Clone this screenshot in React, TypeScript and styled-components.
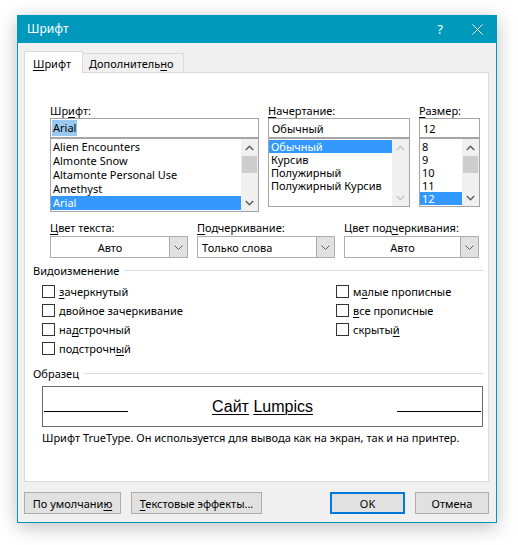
import React from "react";
import styled, { createGlobalStyle } from "styled-components";

const UI_FONT = `"Segoe UI", "Noto Sans", "DejaVu Sans", sans-serif`;

const GlobalStyle = createGlobalStyle`
  html, body { margin: 0; padding: 0; background: #ffffff; }
  body {
    font-family: ${UI_FONT};
    font-size: 11px;
    color: #000;
  }
  * { box-sizing: border-box; }
`;

const Page = styled.div`
  width: 518px;
  height: 545px;
  padding: 15px 0 0 17px;
  overflow: hidden;
`;

const Dialog = styled.div`
  width: 480px;
  border: 1px solid #0099bc;
  border-top: none;
  background: #f0f0f0;
  box-shadow: 0 4px 18px rgba(0, 0, 0, 0.26);
  display: flex;
  flex-direction: column;
`;

const TitleBar = styled.div`
  height: 28px;
  background: #0099bc;
  color: #fff;
  display: flex;
  align-items: center;
  padding: 0 13px 0 9px;
`;

const TitleText = styled.div`
  flex: 1;
  font-size: 12px;
  line-height: 16px;
`;

const TitleButtons = styled.div`
  display: flex;
  align-items: center;
  gap: 29px;
`;

const HelpGlyph = styled.span`
  font-size: 13px;
  line-height: 16px;
  color: #fff;
`;

const Body = styled.div`
  padding: 8px 7px 8px 6px;
  display: flex;
  flex-direction: column;
`;

const TabStrip = styled.div`
  display: flex;
  align-items: flex-end;
  height: 21px;
  position: relative;
  z-index: 1;
`;

const Tab = styled.div<{ $active?: boolean; $w: number }>`
  width: ${(p) => p.$w}px;
  height: ${(p) => (p.$active ? 22 : 19)}px;
  margin-bottom: ${(p) => (p.$active ? -1 : 0)}px;
  margin-left: ${(p) => (p.$active ? 0 : -1)}px;
  padding-left: ${(p) => (p.$active ? 8 : 6)}px;
  padding-top: 1px;
  background: ${(p) => (p.$active ? "#ffffff" : "#f0f0f0")};
  border: 1px solid #d9d9d9;
  border-bottom: none;
  display: flex;
  align-items: center;
  white-space: nowrap;
  position: relative;
  z-index: ${(p) => (p.$active ? 2 : 1)};
`;

const Panel = styled.div`
  background: #fff;
  border: 1px solid #d9d9d9;
  padding: 30px 5px 36px 8px;
  display: flex;
  flex-direction: column;
`;

const FontGrid = styled.div`
  margin-left: 17px;
  display: grid;
  grid-template-columns: 209px 142px 61px;
  column-gap: 9px;
  align-items: start;
`;

const Field = styled.div`
  display: flex;
  flex-direction: column;
`;

const FieldLabel = styled.div`
  height: 15px;
  line-height: 15px;
  white-space: nowrap;
`;

const TextInput = styled.div<{ $pad: number }>`
  height: 20px;
  border: 1px solid #a5a5a5;
  background: #fff;
  padding-left: ${(p) => p.$pad}px;
  display: flex;
  align-items: center;
  white-space: nowrap;
`;

const Highlight = styled.span`
  background: #99c9ef;
  padding: 0 1px;
  line-height: 16px;
`;

const ListBox = styled.div`
  border: 1px solid #a5a5a5;
  background: #fff;
  display: flex;
`;

const ListItems = styled.div`
  flex: 1;
  min-width: 0;
  padding: 1px 0;
`;

const ListItem = styled.div<{ $selected?: boolean; $h: number }>`
  height: ${(p) => p.$h}px;
  line-height: ${(p) => p.$h}px;
  padding-left: 2px;
  background: ${(p) => (p.$selected ? "#3399ff" : "transparent")};
  color: ${(p) => (p.$selected ? "#ffffff" : "#000000")};
  white-space: nowrap;
`;

const ScrollBar = styled.div`
  width: 17px;
  background: #f0f0f0;
  display: flex;
  flex-direction: column;
  align-items: center;
`;

const ScrollArrow = styled.div`
  width: 17px;
  height: 17px;
  display: flex;
  align-items: center;
  justify-content: center;
`;

const ScrollThumb = styled.div`
  width: 15px;
  height: 17px;
  background: #cdcdcd;
`;

const ScrollSpacer = styled.div`
  flex: 1;
`;

const ComboGrid = styled.div`
  margin: 8px 0 0 17px;
  display: grid;
  grid-template-columns: 138px 138px 135px;
  column-gap: 9px;
`;

const Combo = styled.div`
  margin-top: 1px;
  height: 22px;
  border: 1px solid #adadad;
  background: #fff;
  display: flex;
`;

const ComboText = styled.div<{ $center?: boolean }>`
  flex: 1;
  display: flex;
  align-items: center;
  justify-content: ${(p) => (p.$center ? "center" : "flex-start")};
  padding-left: ${(p) => (p.$center ? 0 : 4)}px;
  white-space: nowrap;
`;

const ComboButton = styled.div`
  width: 18px;
  background: #e1e1e1;
  border-left: 1px solid #adadad;
  display: flex;
  align-items: center;
  justify-content: center;
`;

const GroupHeader = styled.div<{ $top: number }>`
  margin-top: ${(p) => p.$top}px;
  height: 15px;
  line-height: 15px;
  display: flex;
  align-items: center;
  gap: 5px;
  white-space: nowrap;
  &::after {
    content: "";
    flex: 1;
    height: 1px;
    background: #dcdcdc;
  }
`;

const CheckColumns = styled.div`
  margin: 4px 0 0 9px;
  display: grid;
  grid-template-columns: 294px 1fr;
`;

const CheckColumn = styled.div`
  display: flex;
  flex-direction: column;
`;

const CheckRow = styled.div`
  height: 19px;
  display: flex;
  align-items: center;
  gap: 4px;
  white-space: nowrap;
`;

const CheckBox = styled.span`
  width: 13px;
  height: 13px;
  border: 1px solid #333333;
  background: #fff;
  flex: none;
`;

const PreviewBox = styled.div`
  margin: 5px 0 0 9px;
  height: 41px;
  border: 1px solid #696969;
  background: #fff;
  display: flex;
  align-items: center;
  justify-content: space-between;
  padding: 0 1px;
`;

const PreviewRule = styled.div`
  width: 84px;
  height: 1px;
  background: #000;
  margin-top: 10px;
`;

const PreviewText = styled.span`
  font-family: "Liberation Sans", Arial, sans-serif;
  font-size: 16px;
  line-height: 18px;
  white-space: pre;
  color: #000;
`;

const PreviewWord = styled.span`
  text-decoration: underline;
  text-decoration-thickness: 1px;
  text-underline-offset: 2px;
`;

const Description = styled.div`
  margin: 3px 0 0 9px;
  height: 15px;
  line-height: 15px;
  white-space: nowrap;
`;

const ButtonRow = styled.div`
  margin-top: 10px;
  display: flex;
  gap: 10px;
`;

const Button = styled.div<{ $w: number; $default?: boolean; $push?: boolean }>`
  width: ${(p) => p.$w}px;
  height: 22px;
  margin-left: ${(p) => (p.$push ? "auto" : "0")};
  background: #e1e1e1;
  border: ${(p) => (p.$default ? "2px solid #0078d7" : "1px solid #adadad")};
  display: flex;
  align-items: center;
  justify-content: center;
  white-space: nowrap;
`;

const Mn = styled.span`
  text-decoration: underline;
  text-decoration-thickness: 1px;
  text-underline-offset: 2px;
`;

const Chevron = ({ up, color }: { up?: boolean; color: string }) => (
  <svg width="9" height="6" viewBox="0 0 9 6">
    <polyline
      points={up ? "0.8,5 4.5,1.3 8.2,5" : "0.8,1 4.5,4.7 8.2,1"}
      fill="none"
      stroke={color}
      strokeWidth="1.5"
    />
  </svg>
);

const ComboChevron = () => (
  <svg width="9" height="5" viewBox="0 0 9 5">
    <polyline points="0.5,0.5 4.5,4.5 8.5,0.5" fill="none" stroke="#606060" strokeWidth="1" />
  </svg>
);

const CloseIcon = () => (
  <svg width="11" height="11" viewBox="0 0 11 11">
    <path d="M0.5 0.5 L10.5 10.5 M10.5 0.5 L0.5 10.5" stroke="#ffffff" strokeWidth="1" />
  </svg>
);

type ListProps = {
  items: string[];
  selected: number;
  h: number;
  disabled?: boolean;
};

const List = ({ items, selected, h, disabled }: ListProps) => {
  const arrowColor = disabled ? "#c6c6c6" : "#606060";
  return (
    <ListBox>
      <ListItems>
        {items.map((it, i) => (
          <ListItem key={i} $h={h} $selected={i === selected}>
            {it}
          </ListItem>
        ))}
      </ListItems>
      <ScrollBar>
        <ScrollArrow>
          <Chevron up color={arrowColor} />
        </ScrollArrow>
        {!disabled && <ScrollThumb />}
        <ScrollSpacer />
        <ScrollArrow>
          <Chevron color={arrowColor} />
        </ScrollArrow>
      </ScrollBar>
    </ListBox>
  );
};

export default function App() {
  return (
    <>
      <GlobalStyle />
      <Page>
        <Dialog>
          <TitleBar>
            <TitleText>Шрифт</TitleText>
            <TitleButtons>
              <HelpGlyph>?</HelpGlyph>
              <CloseIcon />
            </TitleButtons>
          </TitleBar>
          <Body>
            <TabStrip>
              <Tab $active $w={59}>
                <span>
                  <Mn>Ш</Mn>рифт
                </span>
              </Tab>
              <Tab $w={102}>
                <span>
                  Дополнитель<Mn>н</Mn>о
                </span>
              </Tab>
            </TabStrip>
            <Panel>
              <FontGrid>
                <Field>
                  <FieldLabel>
                    Шр<Mn>и</Mn>фт:
                  </FieldLabel>
                  <TextInput $pad={1}>
                    <Highlight>Arial</Highlight>
                  </TextInput>
                  <List
                    h={14}
                    selected={4}
                    items={["Alien Encounters", "Almonte Snow", "Altamonte Personal Use", "Amethyst", "Arial"]}
                  />
                </Field>
                <Field>
                  <FieldLabel>
                    <Mn>Н</Mn>ачертание:
                  </FieldLabel>
                  <TextInput $pad={3}>Обычный</TextInput>
                  <List
                    h={13}
                    selected={0}
                    disabled
                    items={["Обычный", "Курсив", "Полужирный", "Полужирный Курсив", ""]}
                  />
                </Field>
                <Field>
                  <FieldLabel>
                    <Mn>Р</Mn>азмер:
                  </FieldLabel>
                  <TextInput $pad={3}>12</TextInput>
                  <List h={13} selected={4} items={["8", "9", "10", "11", "12"]} />
                </Field>
              </FontGrid>

              <ComboGrid>
                <Field>
                  <FieldLabel>
                    <Mn>Ц</Mn>вет текста:
                  </FieldLabel>
                  <Combo>
                    <ComboText $center>Авто</ComboText>
                    <ComboButton>
                      <ComboChevron />
                    </ComboButton>
                  </Combo>
                </Field>
                <Field>
                  <FieldLabel>
                    <Mn>П</Mn>одчеркивание:
                  </FieldLabel>
                  <Combo>
                    <ComboText>Только слова</ComboText>
                    <ComboButton>
                      <ComboChevron />
                    </ComboButton>
                  </Combo>
                </Field>
                <Field>
                  <FieldLabel>
                    Цвет под<Mn>ч</Mn>еркивания:
                  </FieldLabel>
                  <Combo>
                    <ComboText $center>Авто</ComboText>
                    <ComboButton>
                      <ComboChevron />
                    </ComboButton>
                  </Combo>
                </Field>
              </ComboGrid>

              <GroupHeader $top={5}>Видоизменение</GroupHeader>
              <CheckColumns>
                <CheckColumn>
                  <CheckRow>
                    <CheckBox />
                    <span>
                      <Mn>з</Mn>ачеркнутый
                    </span>
                  </CheckRow>
                  <CheckRow>
                    <CheckBox />
                    <span>двойное зачеркивание</span>
                  </CheckRow>
                  <CheckRow>
                    <CheckBox />
                    <span>
                      на<Mn>д</Mn>строчный
                    </span>
                  </CheckRow>
                  <CheckRow>
                    <CheckBox />
                    <span>
                      подстрочн<Mn>ы</Mn>й
                    </span>
                  </CheckRow>
                </CheckColumn>
                <CheckColumn>
                  <CheckRow>
                    <CheckBox />
                    <span>
                      м<Mn>а</Mn>лые прописные
                    </span>
                  </CheckRow>
                  <CheckRow>
                    <CheckBox />
                    <span>
                      <Mn>в</Mn>се прописные
                    </span>
                  </CheckRow>
                  <CheckRow>
                    <CheckBox />
                    <span>
                      скрыты<Mn>й</Mn>
                    </span>
                  </CheckRow>
                </CheckColumn>
              </CheckColumns>

              <GroupHeader $top={8}>Образец</GroupHeader>
              <PreviewBox>
                <PreviewRule />
                <PreviewText>
                  <PreviewWord>Сайт</PreviewWord> <PreviewWord>Lumpics</PreviewWord>
                </PreviewText>
                <PreviewRule />
              </PreviewBox>
              <Description>
                Шрифт TrueType. Он используется для вывода как на экран, так и на принтер.
              </Description>
            </Panel>

            <ButtonRow>
              <Button $w={97}>
                <span>
                  По умолчани<Mn>ю</Mn>
                </span>
              </Button>
              <Button $w={131}>
                <span>
                  <Mn>Т</Mn>екстовые эффекты...
                </span>
              </Button>
              <Button $w={75} $default $push>
                OK
              </Button>
              <Button $w={74}>Отмена</Button>
            </ButtonRow>
          </Body>
        </Dialog>
      </Page>
    </>
  );
}
